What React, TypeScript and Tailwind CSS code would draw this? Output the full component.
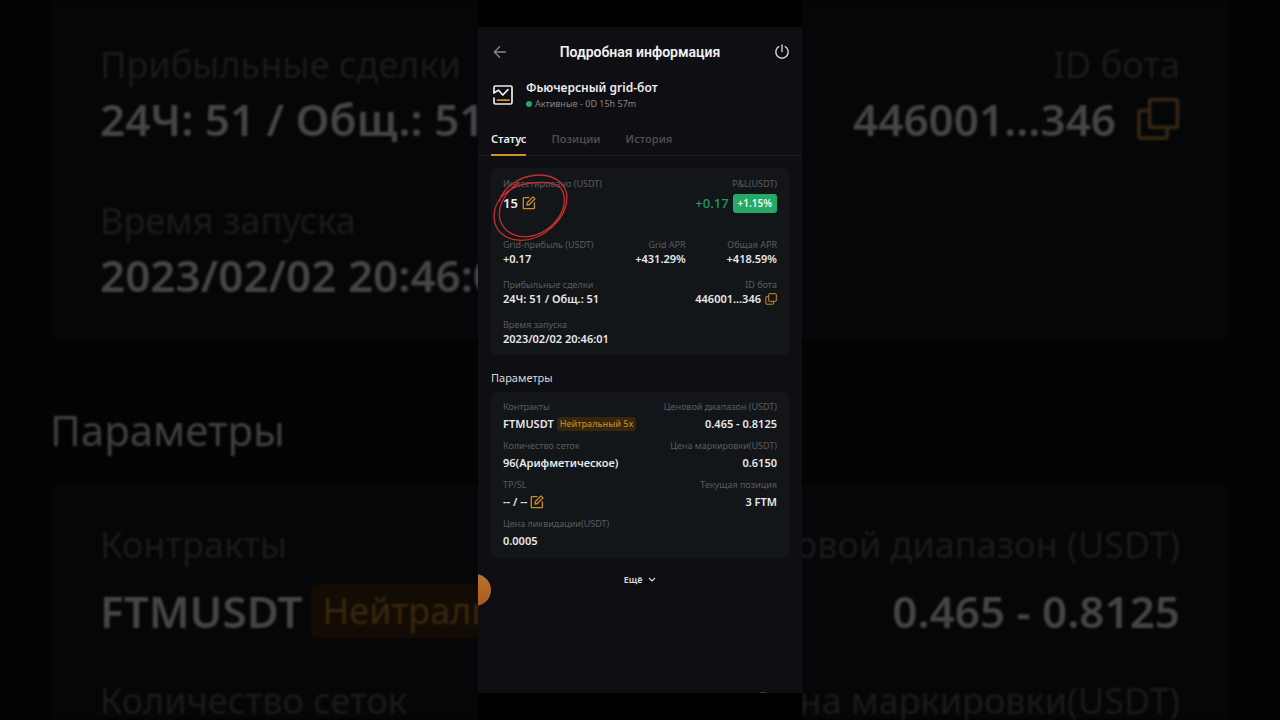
import type { ReactNode } from 'react';

const EditIcon = () => (
  <svg viewBox="0 0 14 14" className="h-3.5 w-3.5" fill="none" stroke="#c98f2c" strokeWidth="1.3" strokeLinecap="round" strokeLinejoin="round">
    <path d="M7 1.6H1.9a.6.6 0 0 0-.6.6v9.9a.6.6 0 0 0 .6.6h9.9a.6.6 0 0 0 .6-.6V7" />
    <path d="M4.8 9.2l.6-2.7L11 .9l2 2-5.6 5.6-2.6.7z" />
  </svg>
);

const CopyIcon = ({ className }: { className: string }) => (
  <svg viewBox="0 0 12 12" className={className} fill="none" stroke="currentColor" strokeWidth="1" strokeLinejoin="round">
    <rect x="3.7" y="0.7" width="7.6" height="7.6" rx="0.6" />
    <path d="M3.7 3.7H1.4a.6.6 0 0 0-.6.6v6.3a.6.6 0 0 0 .6.6h6.5a.6.6 0 0 0 .6-.6V8.3" />
  </svg>
);

const label = 'text-[9px] leading-[14px] whitespace-nowrap text-[#5a5b60]';

function Field({ name, children, right = false }: { name: string; children: ReactNode; right?: boolean }) {
  return (
    <div className={right ? 'flex flex-col items-end' : 'flex flex-col items-start'}>
      <dt className={label}>{name}</dt>
      <dd className="flex items-center text-[11px] leading-[14px] font-semibold whitespace-nowrap text-[#e8e8ea]">{children}</dd>
    </div>
  );
}

function Param({ name, children, right = false }: { name: string; children: ReactNode; right?: boolean }) {
  return (
    <div className={right ? 'flex flex-col items-end gap-0.5' : 'flex flex-col items-start gap-0.5'}>
      <dt className={label}>{name}</dt>
      <dd className="flex items-center text-[11px] leading-4 font-semibold whitespace-nowrap text-[#e8e8ea]">{children}</dd>
    </div>
  );
}

const bigLabel = 'text-[36px] leading-[54px] font-normal text-[#1a1b1d]';

function Backdrop() {
  return (
    <div aria-hidden="true" className="absolute inset-0 overflow-hidden bg-[#030304] px-[50px] blur-[1px]">
      <div className="flex h-[340px] justify-between rounded-b-2xl bg-[#050608] px-[50px] pt-[38px] text-[44px] font-semibold whitespace-nowrap text-[#454547]">
        <div>
          <p className={bigLabel}>Прибыльные сделки</p>
          <p className="leading-[54px]">24Ч: 51 / Общ.: 51</p>
          <p className="h-12" />
          <p className={bigLabel}>Время запуска</p>
          <p className="leading-[54px]">2023/02/02 20:46:01</p>
        </div>
        <div className="flex flex-col items-end">
          <p className={bigLabel}>ID бота</p>
          <p className="flex items-center gap-5 leading-[54px]">
            446001...346
            <CopyIcon className="h-11 w-11 text-[#372610]" />
          </p>
        </div>
      </div>
      <p className="h-[142px] pt-[62px] text-[42px] leading-[56px] text-[#404042]">Параметры</p>
      <div className="flex h-[400px] justify-between rounded-t-2xl bg-[#050608] px-[50px] pt-9 text-[44px] font-semibold whitespace-nowrap text-[#454547]">
        <div>
          <p className={bigLabel}>Контракты</p>
          <p className="mt-3 mb-9 flex items-center gap-2 leading-[54px]">
            FTMUSDT
            <span className="rounded-md bg-[#120c04] px-3 text-[36px] font-normal text-[#3a280e]">Нейтральный 5x</span>
          </p>
          <p className={bigLabel}>Количество сеток</p>
        </div>
        <div className="text-right">
          <p className={bigLabel}>Ценовой диапазон (USDT)</p>
          <p className="mt-3 mb-9 leading-[54px]">0.465 - 0.8125</p>
          <p className={bigLabel}>Цена маркировки(USDT)</p>
        </div>
      </div>
    </div>
  );
}

export default function App() {
  return (
    <div className="relative min-h-screen overflow-hidden bg-black font-['Noto_Sans',sans-serif]">
      <Backdrop />
      <main className="relative mx-auto flex min-h-screen w-[324px] flex-col bg-black py-[27px]">
        <div className="relative flex flex-1 flex-col overflow-hidden bg-[#0f0f13]">
          <header className="flex items-center justify-between px-3 pt-[13px]">
            <button type="button" aria-label="Назад" className="flex h-6 w-6 items-center pl-[3px]">
              <svg viewBox="0 0 14 14" className="h-3.5 w-3.5" fill="none" stroke="#85868a" strokeWidth="1.3">
                <path d="M13 7H1.5M7 1.3L1.3 7 7 12.7" />
              </svg>
            </button>
            <h1 className="font-[Roboto,sans-serif] text-[14px] leading-6 font-semibold text-[#f2f2f3]">Подробная информация</h1>
            <button type="button" aria-label="Остановить" className="flex h-6 w-6 items-center justify-end">
              <svg viewBox="0 0 16 16" className="h-4 w-4" fill="none" stroke="#d4d4d6" strokeWidth="1.4" strokeLinecap="round">
                <path d="M8 1v6.5M4.8 2.7a6.2 6.2 0 1 0 6.4 0" />
              </svg>
            </button>
          </header>

          <section className="mt-[15px] flex items-center gap-[13px] px-[15px]">
            <svg viewBox="0 0 20 20" className="h-5 w-5" fill="none" stroke="#ededee" strokeWidth="1.7" strokeLinejoin="round" strokeLinecap="round">
              <path d="M1 7.8V2.4A1.4 1.4 0 0 1 2.4 1h15.2A1.4 1.4 0 0 1 19 2.4v15.2a1.4 1.4 0 0 1-1.4 1.4H2.4A1.4 1.4 0 0 1 1 17.6V13" />
              <path d="M1 7.8l4.600-2.600 4.200 4.800L15 4.600" />
              <path d="M4.500 15.200h11.500" stroke="#d0902c" />
            </svg>
            <div>
              <h2 className="text-[12px] leading-[18px] font-semibold text-[#ececee]">Фьючерсный grid-бот</h2>
              <p className="flex items-center gap-[3px] text-[9px] leading-[14px] text-[#85868b]">
                <span className="h-1.5 w-1.5 rounded-full bg-[#25a566]" />
                Активные - 0D 15h 57m
              </p>
            </div>
          </section>

          <nav className="mt-4 flex gap-[25px] border-b border-[#1d1e22] px-[13px] text-[11px] leading-4 font-semibold text-[#4a4b50]">
            <button type="button" className="-mb-px border-b-2 border-[#d0902c] pt-1 pb-[7px] text-[#ececee]">Статус</button>
            <button type="button" className="-mb-px border-b-2 border-transparent pt-1 pb-[7px]">Позиции</button>
            <button type="button" className="-mb-px border-b-2 border-transparent pt-1 pb-[7px]">История</button>
          </nav>

          <dl className="relative mx-[13px] mt-3 flex flex-col rounded-md bg-[#131619] px-3 py-[9px]">
            <div className="flex justify-between">
              <div>
                <dt className={label}>Инвестировано (USDT)</dt>
                <dd className="flex items-center gap-1 text-[13px] leading-6 font-semibold text-[#ececee]">
                  15
                  <button type="button" aria-label="Изменить сумму"><EditIcon /></button>
                </dd>
              </div>
              <div className="flex flex-col items-end">
                <dt className={label}>P&amp;L(USDT)</dt>
                <dd className="flex items-center gap-1 text-[13px] leading-6 font-medium text-[#269b60]">
                  +0.17
                  <span className="rounded-[3px] bg-[#25a968] px-[5px] text-[10px] leading-[19px] font-semibold text-[#f0f5f2]">+1.15%</span>
                </dd>
              </div>
            </div>
            <div className="mt-[23px] grid grid-cols-3">
              <Field name="Grid-прибыль (USDT)">+0.17</Field>
              <Field name="Grid APR" right>+431.29%</Field>
              <Field name="Общая APR" right>+418.59%</Field>
            </div>
            <div className="mt-3 flex justify-between">
              <Field name="Прибыльные сделки">24Ч: 51 / Общ.: 51</Field>
              <Field name="ID бота" right>
                446001...346
                <button type="button" aria-label="Копировать ID" className="ml-1 text-[#c98f2c]"><CopyIcon className="h-3 w-3" /></button>
              </Field>
            </div>
            <div className="mt-3">
              <Field name="Время запуска">2023/02/02 20:46:01</Field>
            </div>
            <svg viewBox="0 0 270 225" className="pointer-events-none absolute top-[3px] -left-[3px] h-[75px] w-[90px]" fill="none" stroke="#c62f2b" strokeWidth="4" strokeLinecap="round" strokeLinejoin="round">
              <path d="M34 90C50 40 105 12 155 12c45 0 82 28 82 68 0 60-67 127-137 128-50 0-82-30-82-72C18 85 62 46 120 38c50-8 90-2 104 22 20 55-25 110-75 130-50 18-95 2-112-40-12-40 12-85 55-116" />
            </svg>
          </dl>

          <h3 className="mt-[15px] px-[13px] text-[11px] leading-4 text-[#d7d7d9]">Параметры</h3>

          <dl className="mx-[13px] mt-1.5 grid grid-cols-2 gap-y-[7px] rounded-md bg-[#131619] px-3 pt-2 pb-[9px]">
            <Param name="Контракты">
              FTMUSDT
              <span className="ml-[3px] rounded-[3px] bg-[#36260d] px-[3px] text-[9px] leading-[14px] font-medium text-[#bd8524]">Нейтральный 5x</span>
            </Param>
            <Param name="Ценовой диапазон (USDT)" right>0.465 - 0.8125</Param>
            <Param name="Количество сеток">96(Арифметическое)</Param>
            <Param name="Цена маркировки(USDT)" right>0.6150</Param>
            <Param name="TP/SL">
              -- / --
              <button type="button" aria-label="Изменить TP/SL" className="ml-[3px]"><EditIcon /></button>
            </Param>
            <Param name="Текущая позиция" right>3 FTM</Param>
            <Param name="Цена ликвидации(USDT)">0.0005</Param>
          </dl>

          <button type="button" className="mx-auto mt-[14px] flex items-center gap-1.5 text-[9px] leading-4 font-semibold text-[#dcdcde]">
            Ещё
            <svg viewBox="0 0 8 6" className="h-1.5 w-2" fill="none" stroke="currentColor" strokeWidth="1.2">
              <path d="M1 1l3 3 3-3" />
            </svg>
          </button>
          <span className="absolute top-[547px] -left-[19px] h-8 w-8 rounded-full bg-linear-to-b from-[#b4732e] to-[#ad5a20]" />
          <span className="absolute right-9 bottom-0 h-px w-1.5 bg-[#3a3a3e]" />
        </div>
      </main>
    </div>
  );
}
